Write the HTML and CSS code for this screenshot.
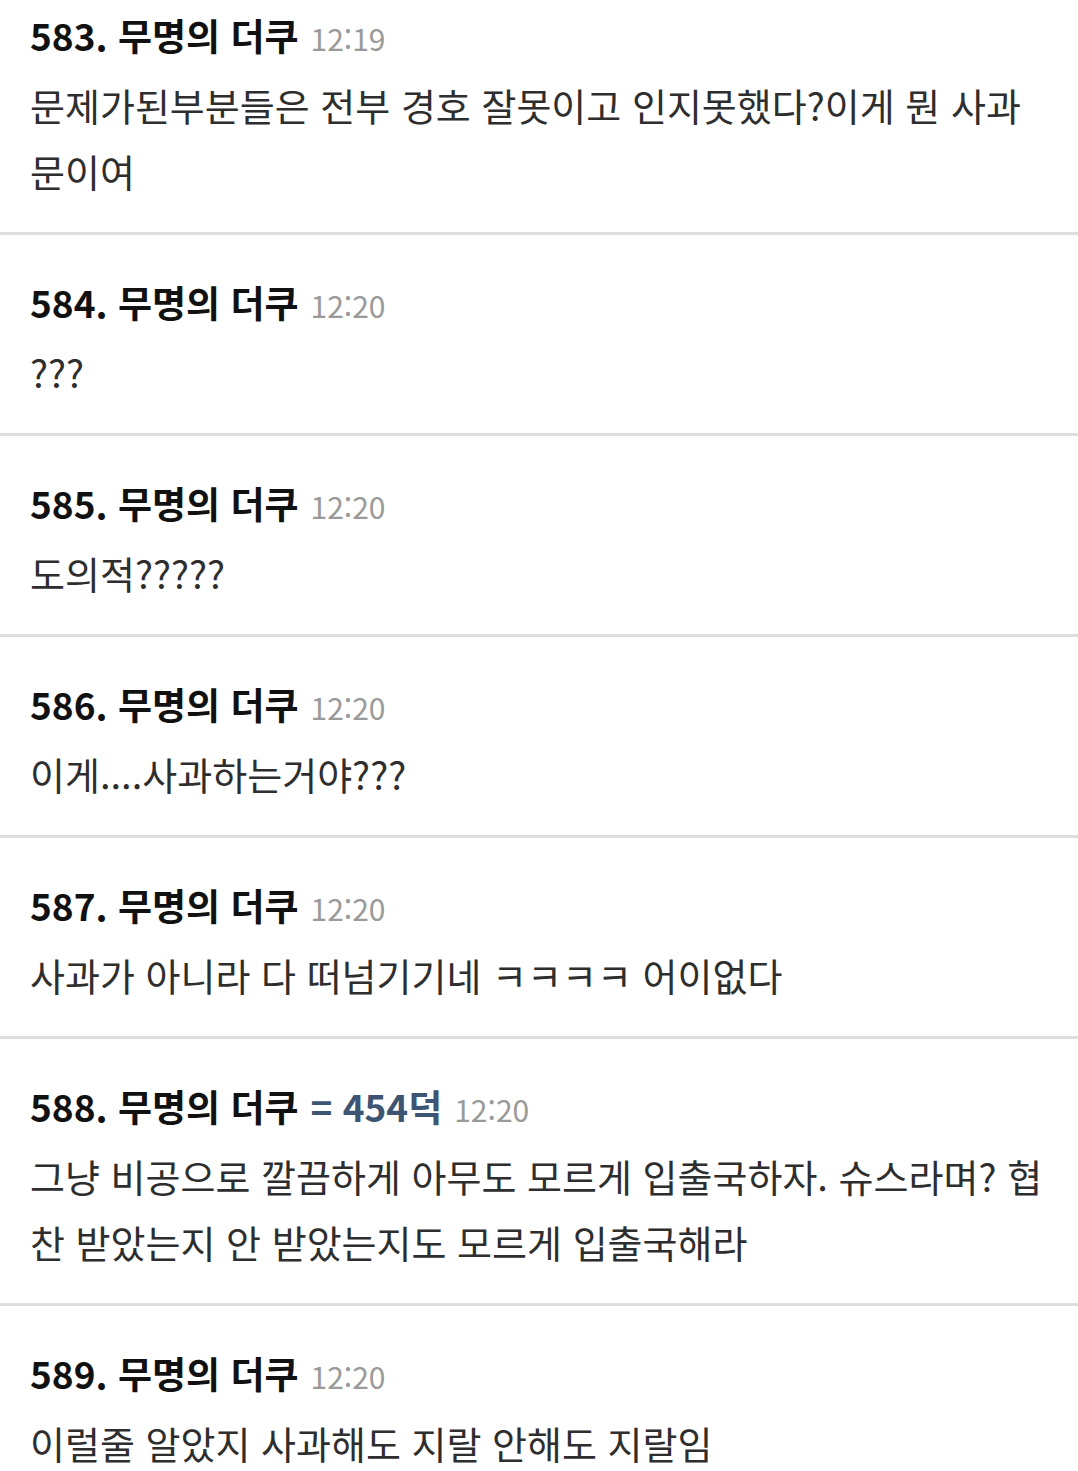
FILE: index.html
```html
<!DOCTYPE html>
<html lang="ko">
<head>
<meta charset="utf-8">
<link rel="stylesheet" href="styles.css">
</head>
<body>
<div class="list">
  <div class="item first">
    <div class="head"><span class="name">583. 무명의 더쿠</span><span class="time">12:19</span></div>
    <div class="body">문제가된부분들은 전부 경호 잘못이고 인지못했다?이게 뭔 사과<br>문이여</div>
  </div>
  <div class="item">
    <div class="head"><span class="name">584. 무명의 더쿠</span><span class="time">12:20</span></div>
    <div class="body">???</div>
  </div>
  <div class="item">
    <div class="head"><span class="name">585. 무명의 더쿠</span><span class="time">12:20</span></div>
    <div class="body">도의적?????</div>
  </div>
  <div class="item">
    <div class="head"><span class="name">586. 무명의 더쿠</span><span class="time">12:20</span></div>
    <div class="body">이게....사과하는거야???</div>
  </div>
  <div class="item">
    <div class="head"><span class="name">587. 무명의 더쿠</span><span class="time">12:20</span></div>
    <div class="body">사과가 아니라 다 떠넘기기네 ㅋㅋㅋㅋ 어이없다</div>
  </div>
  <div class="item">
    <div class="head"><span class="name">588. 무명의 더쿠</span><span class="duk">= 454덕</span><span class="time">12:20</span></div>
    <div class="body">그냥 비공으로 깔끔하게 아무도 모르게 입출국하자. 슈스라며? 협<br>찬 받았는지 안 받았는지도 모르게 입출국해라</div>
  </div>
  <div class="item last">
    <div class="head"><span class="name">589. 무명의 더쿠</span><span class="time">12:20</span></div>
    <div class="body">이럴줄 알았지 사과해도 지랄 안해도 지랄임</div>
  </div>
</div>
</body>
</html>
```

FILE: styles.css
```css
html, body {
  margin: 0;
  padding: 0;
  background: #ffffff;
}

body {
  font-family: "Noto Sans CJK KR", "Noto Sans", sans-serif;
  overflow: hidden;
}

.list {
  display: flex;
  flex-direction: column;
}

.item {
  padding: 42px 30px 28px 30px;
  border-bottom: 3px solid #dedede;
}

.item.first {
  padding-top: 10px;
}

.item.last {
  border-bottom: none;
}

.head {
  display: flex;
  align-items: baseline;
  gap: 12px;
  height: 50px;
  line-height: 50px;
}

.name {
  font-size: 37px;
  font-weight: 700;
  color: #111111;
}

.duk {
  font-size: 37px;
  font-weight: 700;
  color: #3d5472;
}

.time {
  font-size: 30px;
  color: #9a9a9a;
}

.body {
  margin-top: 12px;
  font-size: 38px;
  line-height: 66px;
  color: #2e2e2e;
  white-space: nowrap;
}
```
